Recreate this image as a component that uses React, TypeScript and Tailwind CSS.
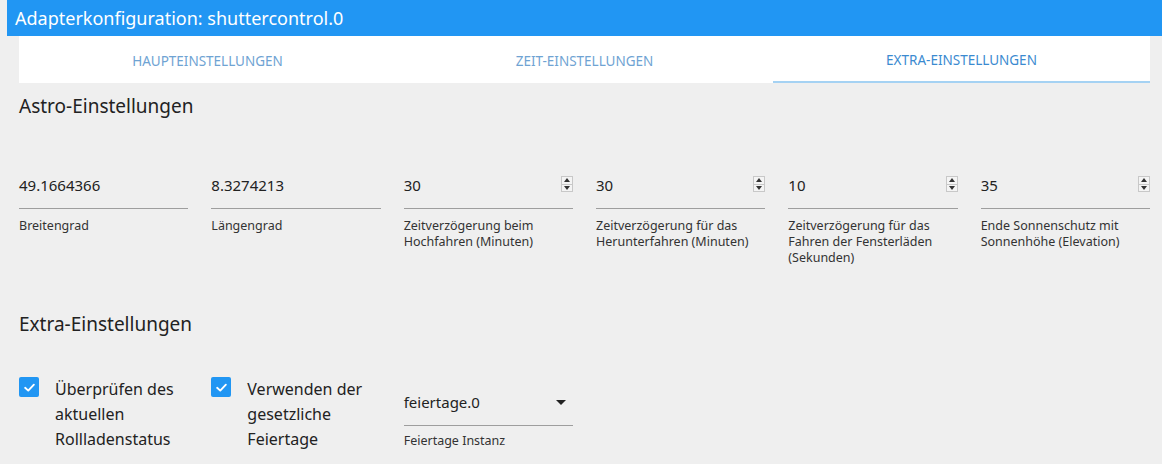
import React from "react";

const font = { fontFamily: '"Noto Sans", "Open Sans", sans-serif' };

function Spinner() {
  return (
    <div className="mt-[1px] flex h-[16px] w-[12px] flex-col border border-[#c8c8c8] bg-[#f4f4f4]">
      <div className="flex flex-1 items-center justify-center border-b border-[#c8c8c8]">
        <svg width="6" height="4" viewBox="0 0 6 4"><path d="M3 0 L6 4 L0 4 Z" fill="#333" /></svg>
      </div>
      <div className="flex flex-1 items-center justify-center">
        <svg width="6" height="4" viewBox="0 0 6 4"><path d="M0 0 L6 0 L3 4 Z" fill="#333" /></svg>
      </div>
    </div>
  );
}

function Field({ value, label, spin }: { value: string; label: string; spin?: boolean }) {
  return (
    <div className="flex flex-col">
      <div className="flex h-[34px] items-start justify-between border-b border-[#9e9e9e]">
        <span className="text-[15px] leading-[20px] text-[#222]">{value}</span>
        {spin && <Spinner />}
      </div>
      <div className="mt-[9px] text-[12.5px] leading-[16px] text-[#333]">{label}</div>
    </div>
  );
}

function Check({ label }: { label: React.ReactNode }) {
  return (
    <div className="flex items-start gap-[16px]">
      <div className="mt-[0px] flex h-[20px] w-[20px] shrink-0 items-center justify-center rounded-[2px] bg-[#2196f3]">
        <svg width="15" height="15" viewBox="0 0 24 24" fill="none" stroke="white" strokeWidth="3" strokeLinecap="round" strokeLinejoin="round">
          <path d="M5 12.5 L10 17 L19 7.5" />
        </svg>
      </div>
      <div className="text-[16px] leading-[25px] text-[#222]">{label}</div>
    </div>
  );
}

export default function App() {
  return (
    <div className="h-[464px] w-[1162px] overflow-hidden bg-[#efefef]" style={font}>
      <div className="ml-[7px] flex h-[36px] items-center bg-[#2196f3] pl-[8px] text-[18px] text-white">
        Adapterkonfiguration: shuttercontrol.0
      </div>
      <div className="mr-[12px] ml-[19px] grid h-[47px] grid-cols-3 bg-white text-[13.5px]">
        <div className="flex items-center justify-center pt-[3px] text-[#6fa3d3]">HAUPTEINSTELLUNGEN</div>
        <div className="flex items-center justify-center pt-[3px] text-[#6fa3d3]">ZEIT-EINSTELLUNGEN</div>
        <div className="flex flex-col">
          <div className="flex flex-1 items-center justify-center pt-[3px] text-[#3b8ad0]">EXTRA-EINSTELLUNGEN</div>
          <div className="h-[2px] bg-[#a5d2f3]" />
        </div>
      </div>
      <div className="pr-[12px] pl-[19px]">
        <div className="mt-[10px] text-[19px] leading-[26px] text-[#222]">Astro-Einstellungen</div>
        <div className="mt-[56px] grid grid-cols-6 gap-x-[23px]">
          <Field value="49.1664366" label="Breitengrad" />
          <Field value="8.3274213" label="Längengrad" />
          <Field value="30" label="Zeitverzögerung beim Hochfahren (Minuten)" spin />
          <Field value="30" label="Zeitverzögerung für das Herunterfahren (Minuten)" spin />
          <Field value="10" label="Zeitverzögerung für das Fahren der Fensterläden (Sekunden)" spin />
          <Field value="35" label="Ende Sonnenschutz mit Sonnenhöhe (Elevation)" spin />
        </div>
        <div className="mt-[45px] text-[19px] leading-[26px] text-[#222]">Extra-Einstellungen</div>
        <div className="mt-[40px] grid grid-cols-6 gap-x-[23px]">
          <Check label={<>Überprüfen des<br />aktuellen<br />Rollladenstatus</>} />
          <Check label={<>Verwenden der<br />gesetzliche<br />Feiertage</>} />
          <div className="mt-[15px] flex flex-col">
            <div className="flex h-[34px] items-start justify-between border-b border-[#9e9e9e]">
              <span className="text-[15px] leading-[20px] text-[#222]">feiertage.0</span>
              <svg width="10" height="5" viewBox="0 0 10 5" className="mt-[8px] mr-[7px]"><path d="M0 0 L10 0 L5 5 Z" fill="#222" /></svg>
            </div>
            <div className="mt-[7px] text-[12.5px] leading-[16px] text-[#333]">Feiertage Instanz</div>
          </div>
        </div>
      </div>
    </div>
  );
}
